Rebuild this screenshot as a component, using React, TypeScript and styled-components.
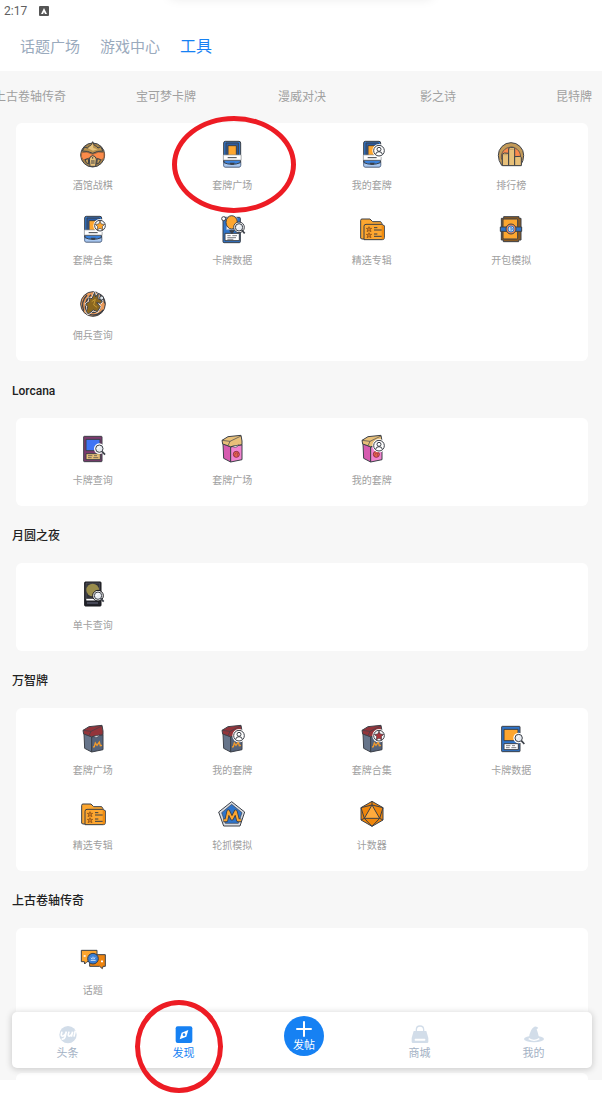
import React from "react";
import styled, { createGlobalStyle } from "styled-components";

const INK = "#3c4048";
const BLUE = "#2f74c9";
const ORANGE = "#fda62f";
const TAN = "#e8c079";

const GlobalStyle = createGlobalStyle`
  *, *::before, *::after { box-sizing: border-box; }
  body {
    margin: 0;
    background: #fff;
    font-family: Roboto, "Noto Sans CJK SC", sans-serif;
    overflow-x: hidden;
  }
  button { border: 0; padding: 0; background: none; font: inherit; cursor: pointer; }
  a { text-decoration: none; }
  ul, h2 { margin: 0; padding: 0; list-style: none; }
`;

const Page = styled.div`
  position: relative;
  padding-bottom: 26px;
`;

const Screen = styled.div`
  position: relative;
  overflow: hidden;
  background: #f7f7f7;
`;

const Header = styled.header`
  background: #fff;
`;

const PullHandle = styled.div`
  position: absolute;
  top: -12px;
  left: 28%;
  right: 28%;
  height: 10px;
  border-radius: 5px;
  box-shadow: 0 0 12px rgba(0, 0, 0, 0.1);
`;

const StatusBar = styled.div`
  display: flex;
  align-items: center;
  gap: 12px;
  height: 21px;
  padding-left: 4px;
  font-size: 12px;
  color: #5f5f5f;
`;

const StatusBadge = styled.svg`
  width: 10px;
  height: 10px;
`;

const Tabs = styled.nav`
  display: flex;
  align-items: center;
  gap: 20px;
  height: 50px;
  padding: 2px 0 0 20px;
`;

const Tab = styled.button<{ $active?: boolean }>`
  font-size: ${(p) => (p.$active ? 16 : 15)}px;
  line-height: 24px;
  color: ${(p) => (p.$active ? "#1681f3" : "#9aaabd")};
`;

const Games = styled.nav`
  display: flex;
  justify-content: center;
  height: 52px;
  padding-left: 2px;
  overflow: hidden;
`;

const Game = styled.button`
  flex: 0 0 136px;
  height: 48px;
  font-size: 12px;
  white-space: nowrap;
  color: #a0a0a0;
`;

const SectionTitle = styled.h2`
  height: 57px;
  padding: 1px 0 0 12px;
  font-size: 12px;
  line-height: 58px;
  font-weight: 500;
  color: #222;
`;

const Card = styled.ul`
  display: grid;
  grid-template-columns: repeat(4, 1fr);
  row-gap: 1px;
  margin: 0 14px 0 16px;
  padding: 7px;
  border-radius: 6px;
  background: #fff;
`;

const NextCard = styled.div`
  height: 7px;
  margin: 57px 14px 0 16px;
  border-radius: 6px 6px 0 0;
  background: #fff;
`;

const Tool = styled.a`
  display: flex;
  flex-direction: column;
  align-items: center;
  gap: 10px;
  height: 74px;
  padding-top: 10px;
  font-size: 10px;
  line-height: 16px;
  color: #a0a0a0;
`;

const ToolSvg = styled.svg`
  width: 28px;
  height: 28px;
  overflow: visible;
`;

const BottomBar = styled.nav`
  position: absolute;
  left: 12px;
  right: 10px;
  bottom: 12px;
  display: grid;
  grid-template-columns: 111fr 121fr 120fr 111fr 117fr;
  justify-items: center;
  height: 56px;
  border-radius: 5px;
  background: #fff;
  box-shadow: 0 1px 6px 1px rgba(0, 0, 0, 0.16);
`;

const NavItem = styled.a<{ $active?: boolean }>`
  display: flex;
  flex-direction: column;
  align-items: center;
  padding-top: 12px;
  font-size: 11px;
  line-height: 18px;
  color: ${(p) => (p.$active ? "#1681f3" : "#a3b1c4")};
`;

const NavSvg = styled.svg`
  width: 22px;
  height: 21px;
`;

const PostButton = styled.button`
  display: flex;
  flex-direction: column;
  align-items: center;
  width: 40px;
  height: 40px;
  margin-top: 4px;
  padding-top: 5px;
  border-radius: 50%;
  background: #1681f3;
  color: #fff;
  font-size: 11px;
  line-height: 18px;
`;

const PlusSvg = styled.svg`
  width: 16px;
  height: 16px;
`;

const Marker = styled.div<{ $x: string; $y: number; $w: number; $h: number }>`
  position: absolute;
  left: ${(p) => p.$x};
  top: ${(p) => p.$y}px;
  width: ${(p) => p.$w}px;
  height: ${(p) => p.$h}px;
  border: 5px solid #ed1c24;
  border-radius: 50%;
  pointer-events: none;
`;

/* Badges laid over the corner of a tool icon */

const UserBadge = () => (
  <g>
    <circle cx="63" cy="32" r="20" fill="#fff" />
    <circle cx="63" cy="32" r="16" fill="#fff" stroke={INK} strokeWidth="3" />
    <circle cx="63" cy="28" r="6" fill="none" stroke={INK} strokeWidth="3" />
    <path d="M53 43 Q54 35 63 35 Q72 35 73 43" fill="none" stroke={INK} strokeWidth="3" />
  </g>
);

const StarBadge = ({ fill = ORANGE }: { fill?: string }) => (
  <g>
    <circle cx="63" cy="32" r="20" fill="#fff" />
    <circle cx="63" cy="32" r="16" fill="#fff" stroke={INK} strokeWidth="3" />
    <path
      d="M63 18 L67 27 L77 28 L70 35 L72 45 L63 40 L54 45 L56 35 L49 28 L59 27Z"
      fill={fill}
      stroke={INK}
      strokeWidth="2"
    />
  </g>
);

const Lens = ({ x, y }: { x: number; y: number }) => (
  <g transform={`translate(${x} ${y})`}>
    <circle r="16" fill="#fff" />
    <path d="M8 8 L17 18" stroke={INK} strokeWidth="5" />
    <circle r="11" fill="#e9edf2" stroke={INK} strokeWidth="3" />
    <path d="M-5 1 Q-4 -5 2 -6" fill="none" stroke="#fff" strokeWidth="3" />
  </g>
);

/* Tool icons, drawn on an 84 unit square */

const DeckBase = () => (
  <g stroke={INK} strokeWidth="3" strokeLinejoin="round">
    <rect x="17" y="4" width="51" height="77" rx="5" fill={BLUE} />
    <path d="M17 67 H68 V76 Q68 81 63 81 H22 Q17 81 17 76Z" fill="#a9c8f0" stroke="#6d84a8" />
    <path d="M24 9 H61 V45 H24Z" fill="#2a5ca6" />
    <rect x="30" y="17" width="25" height="29" fill={ORANGE} />
    <path d="M18 61 H67 V68 Q56 73 42 73 Q28 73 18 68Z" fill="#3b82dc" />
    <path d="M35 68 H50 L47 74 H38Z" fill={INK} stroke="none" />
    <rect x="16" y="45" width="53" height="15" fill="#fff" stroke="#a3a6ab" strokeWidth="2" />
    <path d="M29 53 H56" />
  </g>
);

const BoxBase = ({ lid, side, front }: { lid: string; side: string; front: string }) => (
  <g stroke={INK} strokeWidth="3" strokeLinejoin="round">
    <path d="M15 26 L38 36 V81 L17 70Z" fill={side} />
    <path d="M38 36 L72 29 V74 L38 81Z" fill={front} />
    <path d="M12 16 L30 5 L69 1 L72 18 L72 29 L38 35 L14 27Z" fill={lid} />
    <path d="M12 16 L36 19 L69 3 M36 19 L31 30" fill="none" strokeWidth="2" />
    <path d="M44 34 Q52 42 63 30Z" fill="#fff" strokeWidth="2" />
  </g>
);

const PinkBox = () => (
  <g>
    <BoxBase lid={TAN} side="#d65bb0" front="#f184cf" />
    <circle cx="55" cy="58" r="9" fill="#f06b4c" stroke="#8f2d49" strokeWidth="3" />
    <path d="M50 62 Q52 50 60 55 Q56 60 58 64" fill="none" stroke="#8f2d49" strokeWidth="2" />
  </g>
);

const SlateBox = () => (
  <g>
    <BoxBase lid="#93343a" side="#66748a" front="#56637a" />
    <path
      d="M42 66 L46 65 L49 54 L54 61 L61 51 L64 62 L69 61"
      fill="none"
      stroke="#f29b2c"
      strokeWidth="4"
    />
  </g>
);

const CardBase = ({ frame, art, text, mark }: { frame: string; art: string; text: string; mark: string }) => (
  <g stroke={INK} strokeWidth="3" strokeLinejoin="round">
    <rect x="14" y="4" width="55" height="76" rx="2" fill={frame} />
    <rect x="21" y="13" width="42" height="34" fill={art} />
    <rect x="21" y="56" width="43" height="18" fill={text} />
    <path d="M27 62 H40 M45 62 H54 M27 68 H38 M43 68 H58" stroke={mark} strokeWidth="2" />
  </g>
);

const Folder = () => (
  <g stroke={INK} strokeWidth="3" strokeLinejoin="round">
    <path d="M8 70 V16 Q8 12 12 12 H36 L44 20 H68 L72 26 V72 H12Z" fill={ORANGE} />
    <path d="M18 74 V34 Q18 28 24 28 H70 L79 32 V68 Q79 74 73 74Z" fill={ORANGE} />
    <path d="M71 30 L78 34 V68 Q78 73 71 73Z" fill="#ef8b10" stroke="none" />
    {[42, 60].map((y) => (
      <path
        key={y}
        d={`M33 ${y - 7} l2 5 h6 l-4 4 2 6 -6 -3 -6 3 2 -6 -4 -4 h6Z`}
        fill="#d97b1a"
        stroke="#7d4a1a"
        strokeWidth="2"
      />
    ))}
    <path d="M48 38 H58 M48 45 H71 M48 57 H58 M48 64 H71" strokeWidth="3" fill="none" />
  </g>
);

const drawings: Record<string, React.ReactNode> = {
  tavern: (
    <g stroke={INK} strokeWidth="3" strokeLinejoin="round">
      <circle cx="41" cy="45" r="36" fill="#a4834b" />
      <path d="M8 38 Q22 32 41 43 Q60 32 75 38 Q78 54 69 60 L52 54 L41 48 L30 54 L13 60 Q4 52 8 38Z" fill="#fb8b4b" stroke="#a5673a" />
      <path d="M10 33 L17 21 L25 24 Q31 17 36 16 L41 5 L46 16 Q53 18 57 24 L65 20 L72 33 Q55 32 41 40 Q26 32 10 33Z" fill="#b99350" />
      <path d="M27 25 Q35 18 41 11 L43 24 L56 28 L42 32Z" fill="#e5c27e" stroke="none" />
      <path d="M31 57 Q34 47 41 47 Q49 47 52 57 L50 79 H33Z" fill={TAN} />
      <path d="M18 59 L28 56 L29 72 L22 68Z M55 56 L65 59 L60 69 L53 72Z" fill="#c9a15a" />
      <path d="M36 63 H47 M36 69 H47 M41 51 V56" />
    </g>
  ),
  deck: <DeckBase />,
  myDeck: (
    <g>
      <DeckBase />
      <UserBadge />
    </g>
  ),
  deckSet: (
    <g>
      <DeckBase />
      <StarBadge />
    </g>
  ),
  rank: (
    <g stroke={INK} strokeWidth="3" strokeLinejoin="round">
      <path d="M14 76 Q4 62 4 46 A38 38 0 0 1 80 46 Q80 62 71 76Z" fill="#c39a58" />
      <path d="M14 58 A29 29 0 1 1 70 58Z" fill="#fb8a4c" strokeWidth="2" />
      <path d="M16 77 V42 L22 39 L35 40 V77Z" fill={TAN} />
      <path d="M35 77 V25 L41 22 H50 L53 26 V77Z" fill={TAN} />
      <path d="M53 77 V50 L70 49 L73 53 V77Z" fill={TAN} />
      <path d="M17 44 H32 M36 28 H50" stroke="#b8915a" strokeWidth="2" />
    </g>
  ),
  cardData: (
    <g stroke={INK} strokeWidth="3" strokeLinejoin="round">
      <rect x="15" y="7" width="52" height="76" rx="3" fill={BLUE} />
      <path d="M26 8 H57 V44 H26Z" fill="#fff" stroke="#8aa9d5" />
      <ellipse cx="41" cy="22" rx="17" ry="20" fill={ORANGE} />
      <circle cx="17" cy="11" r="6" fill="#fff" />
      <rect x="21" y="55" width="43" height="22" fill="#fff" />
      <path d="M28 62 H38 M43 62 H57 M28 68 H54 M28 73 H46" strokeWidth="2" />
      <path d="M35 47 H48 L42 56Z" fill={INK} />
      <Lens x={63} y={37} />
    </g>
  ),
  folder: <Folder />,
  pack: (
    <g stroke={INK} strokeWidth="3" strokeLinejoin="round">
      <path d="M20 5 H66 V10 H72 V75 H65 V80 H19 V75 H13 V10 H20Z" fill="#8a5a22" />
      <rect x="18" y="12" width="44" height="60" rx="3" fill={ORANGE} />
      <rect x="10" y="36" width="64" height="13" fill={BLUE} />
      <circle cx="42" cy="42" r="15" fill="#ef8a58" />
      <circle cx="42" cy="42" r="9" fill="#c8def5" stroke={BLUE} />
      <path d="M39 39 Q46 36 46 42 Q45 47 40 45" fill="none" stroke={BLUE} strokeWidth="3" />
    </g>
  ),
  mercenary: (
    <g stroke={INK} strokeWidth="3" strokeLinejoin="round">
      <circle cx="42" cy="42" r="37" fill="#e99958" />
      <path d="M14 62 Q4 36 24 15 M23 66 Q11 38 36 14 M31 72 Q52 82 73 60 M30 64 Q48 74 64 55 M58 10 Q74 20 77 40" fill="none" strokeWidth="4" />
      <path d="M22 65 L26 50 L20 42 L32 34 L29 23 L39 26 L47 7 L50 21 L58 9 L57 26 L70 33 L65 40 L53 38 L64 50 L55 65 L43 60 L28 72Z" fill="#8b671f" stroke="#fff" strokeWidth="6" />
      <path d="M22 65 L26 50 L20 42 L32 34 L29 23 L39 26 L47 7 L50 21 L58 9 L57 26 L70 33 L65 40 L53 38 L64 50 L55 65 L43 60 L28 72Z" fill="#8b671f" strokeWidth="3" />
      <path d="M38 35 L49 28 L44 45 L54 52" fill="none" stroke="#c69a35" />
      <circle cx="68" cy="24" r="6" fill="#dfe6ea" />
    </g>
  ),
  loreCard: (
    <g>
      <CardBase frame="#7d3a6e" art="#3f74f5" text={TAN} mark={INK} />
      <Lens x={61} y={41} />
    </g>
  ),
  pinkBox: <PinkBox />,
  myPinkBox: (
    <g>
      <PinkBox />
      <UserBadge />
    </g>
  ),
  nightCard: (
    <g stroke="#16171b" strokeWidth="3">
      <rect x="17" y="6" width="49" height="72" rx="2" fill="#22232a" />
      <path d="M21 9 H62 V58 H21Z" fill="#33343a" stroke="#5a5b63" strokeWidth="2" />
      <circle cx="41" cy="30" r="19" fill="#9a8d4c" stroke="none" />
      <path d="M22 59 H52" stroke="#fff" strokeWidth="5" />
      <path d="M24 69 H57" stroke="#6b6d82" />
      <Lens x={57} y={47} />
    </g>
  ),
  slateBox: <SlateBox />,
  mySlateBox: (
    <g>
      <SlateBox />
      <UserBadge />
    </g>
  ),
  slateBoxSet: (
    <g>
      <SlateBox />
      <StarBadge fill="#a8353c" />
    </g>
  ),
  magicCard: (
    <g>
      <CardBase frame={BLUE} art={ORANGE} text="#fff" mark={INK} />
      <Lens x={65} y={39} />
    </g>
  ),
  draft: (
    <g strokeLinejoin="round">
      <path d="M41 5 L80 36 L66 78 H17 L2 36Z" fill="#d9dde3" stroke={INK} strokeWidth="3" />
      <path d="M41 13 L72 38 L61 70 H22 L11 38Z" fill={BLUE} stroke={INK} strokeWidth="2" />
      <path
        d="M16 61 H25 L31 34 L42 56 L53 34 L60 61 H70"
        fill="none"
        stroke={INK}
        strokeWidth="11"
      />
      <path
        d="M17 61 H25 L31 34 L42 56 L53 34 L60 61 H69"
        fill="none"
        stroke={ORANGE}
        strokeWidth="6"
      />
    </g>
  ),
  dice: (
    <g stroke={INK} strokeWidth="3" strokeLinejoin="round">
      <path d="M42 4 L75 23 V60 L42 79 L9 60 V23Z" fill="#ef860b" />
      <path d="M42 15 L65 55 H19Z" fill="#ffab3d" />
      <path d="M42 4 V15 L9 23 L19 55 L9 60 M42 15 L75 23 L65 55 L75 60 M19 55 L42 79 L65 55" fill="none" />
    </g>
  ),
  chat: (
    <g stroke={INK} strokeWidth="3" strokeLinejoin="round">
      <path d="M7 16 H54 V50 H24 L17 57 L16 50 H7Z" fill={ORANGE} />
      <path d="M32 29 H79 V64 H72 L70 71 L62 64 H32Z" fill="#ee8410" />
      <path d="M14 33 H20 M66 49 H72" stroke="#fff" strokeWidth="5" />
      <circle cx="42" cy="41" r="16" fill="#3a7fd6" />
      <path d="M36 38 L39 42 M42 35 V43 M48 37 L45 42 M35 46 H50" stroke="#d5e6fb" />
    </g>
  ),
};

type Entry = [icon: keyof typeof drawings, label: string];

const sections: { title?: string; tools: Entry[] }[] = [
  {
    tools: [
      ["tavern", "酒馆战棋"],
      ["deck", "套牌广场"],
      ["myDeck", "我的套牌"],
      ["rank", "排行榜"],
      ["deckSet", "套牌合集"],
      ["cardData", "卡牌数据"],
      ["folder", "精选专辑"],
      ["pack", "开包模拟"],
      ["mercenary", "佣兵查询"],
    ],
  },
  {
    title: "Lorcana",
    tools: [
      ["loreCard", "卡牌查询"],
      ["pinkBox", "套牌广场"],
      ["myPinkBox", "我的套牌"],
    ],
  },
  { title: "月圆之夜", tools: [["nightCard", "单卡查询"]] },
  {
    title: "万智牌",
    tools: [
      ["slateBox", "套牌广场"],
      ["mySlateBox", "我的套牌"],
      ["slateBoxSet", "套牌合集"],
      ["magicCard", "卡牌数据"],
      ["folder", "精选专辑"],
      ["draft", "轮抓模拟"],
      ["dice", "计数器"],
    ],
  },
  { title: "上古卷轴传奇", tools: [["chat", "话题"]] },
];

const games = ["上古卷轴传奇", "宝可梦卡牌", "漫威对决", "影之诗", "昆特牌"];

export default function App() {
  return (
    <Page>
      <GlobalStyle />
      <Screen>
        <Header>
          <PullHandle />
          <StatusBar>
            <span>2:17</span>
            <StatusBadge viewBox="0 0 10 10" aria-hidden="true">
              <rect width="10" height="10" rx="1" fill="#555" />
              <path d="M5 2 L8 8 H6 L5 6 L4 8 H2Z" fill="#fff" />
            </StatusBadge>
          </StatusBar>
          <Tabs>
            <Tab>话题广场</Tab>
            <Tab>游戏中心</Tab>
            <Tab $active>工具</Tab>
          </Tabs>
        </Header>
        <Games>
          {games.map((g) => (
            <Game key={g}>{g}</Game>
          ))}
        </Games>
        <main>
          {sections.map((s, i) => (
            <section key={i}>
              {s.title && <SectionTitle>{s.title}</SectionTitle>}
              <Card>
                {s.tools.map(([icon, label]) => (
                  <li key={icon}>
                    <Tool href="#">
                      <ToolSvg viewBox="0 0 84 84" aria-hidden="true">
                        {drawings[icon]}
                      </ToolSvg>
                      {label}
                    </Tool>
                  </li>
                ))}
              </Card>
            </section>
          ))}
          <NextCard />
        </main>
        <BottomBar>
          <NavItem href="#">
            <NavSvg viewBox="0 0 66 63" aria-hidden="true">
              <circle cx="33" cy="32" r="26" fill="#d2dde9" />
              <path
                d="M15 23 L13 31 Q12 37 18 36 Q25 35 28 23 M28 23 L24 40 Q22 46 14 45 M36 23 L34 31 Q33 37 38 36 Q44 35 47 23 L43 38 M55 20 L51 38"
                fill="none"
                stroke="#fff"
                strokeWidth="5"
              />
            </NavSvg>
            头条
          </NavItem>
          <NavItem href="#" $active>
            <NavSvg viewBox="0 0 66 63" aria-hidden="true">
              <rect x="8" y="7" width="50" height="50" rx="6" fill="#1681f3" />
              <path d="M46 18 L40 38 L20 46 L26 26Z M33 28 A4 4 0 1 0 33 36 A4 4 0 1 0 33 28Z" fill="#fff" fillRule="evenodd" />
            </NavSvg>
            发现
          </NavItem>
          <PostButton>
            <PlusSvg viewBox="0 0 16 16" aria-hidden="true">
              <path d="M8 1 V15 M1 8 H15" stroke="#fff" strokeWidth="2" strokeLinecap="round" />
            </PlusSvg>
            发帖
          </PostButton>
          <NavItem href="#">
            <NavSvg viewBox="0 0 66 63" aria-hidden="true">
              <path d="M22 26 V17 Q22 6 33 6 Q44 6 44 17 V26" fill="none" stroke="#d2dde9" strokeWidth="4" />
              <path d="M14 21 H52 L58 42 V53 Q58 57 54 57 H12 Q8 57 8 53 V42Z" fill="#d2dde9" />
              <rect x="17" y="44" width="32" height="6" rx="2" fill="#fff" />
            </NavSvg>
            商城
          </NavItem>
          <NavItem href="#">
            <NavSvg viewBox="0 0 66 63" aria-hidden="true">
              <ellipse cx="33" cy="45" rx="30" ry="10" fill="#d2dde9" />
              <path d="M17 44 Q33 54 49 44" fill="none" stroke="#fff" strokeWidth="4" />
              <path d="M18 40 Q22 14 34 8 Q42 6 46 12 L41 16 Q45 27 48 40 Q33 50 18 40Z" fill="#d2dde9" />
            </NavSvg>
            我的
          </NavItem>
        </BottomBar>
      </Screen>
      <Marker $x="calc(50% - 129px)" $y={116} $w={124} $h={97} />
      <Marker $x="calc(50% - 166px)" $y={1000} $w={88} $h={93} />
    </Page>
  );
}
